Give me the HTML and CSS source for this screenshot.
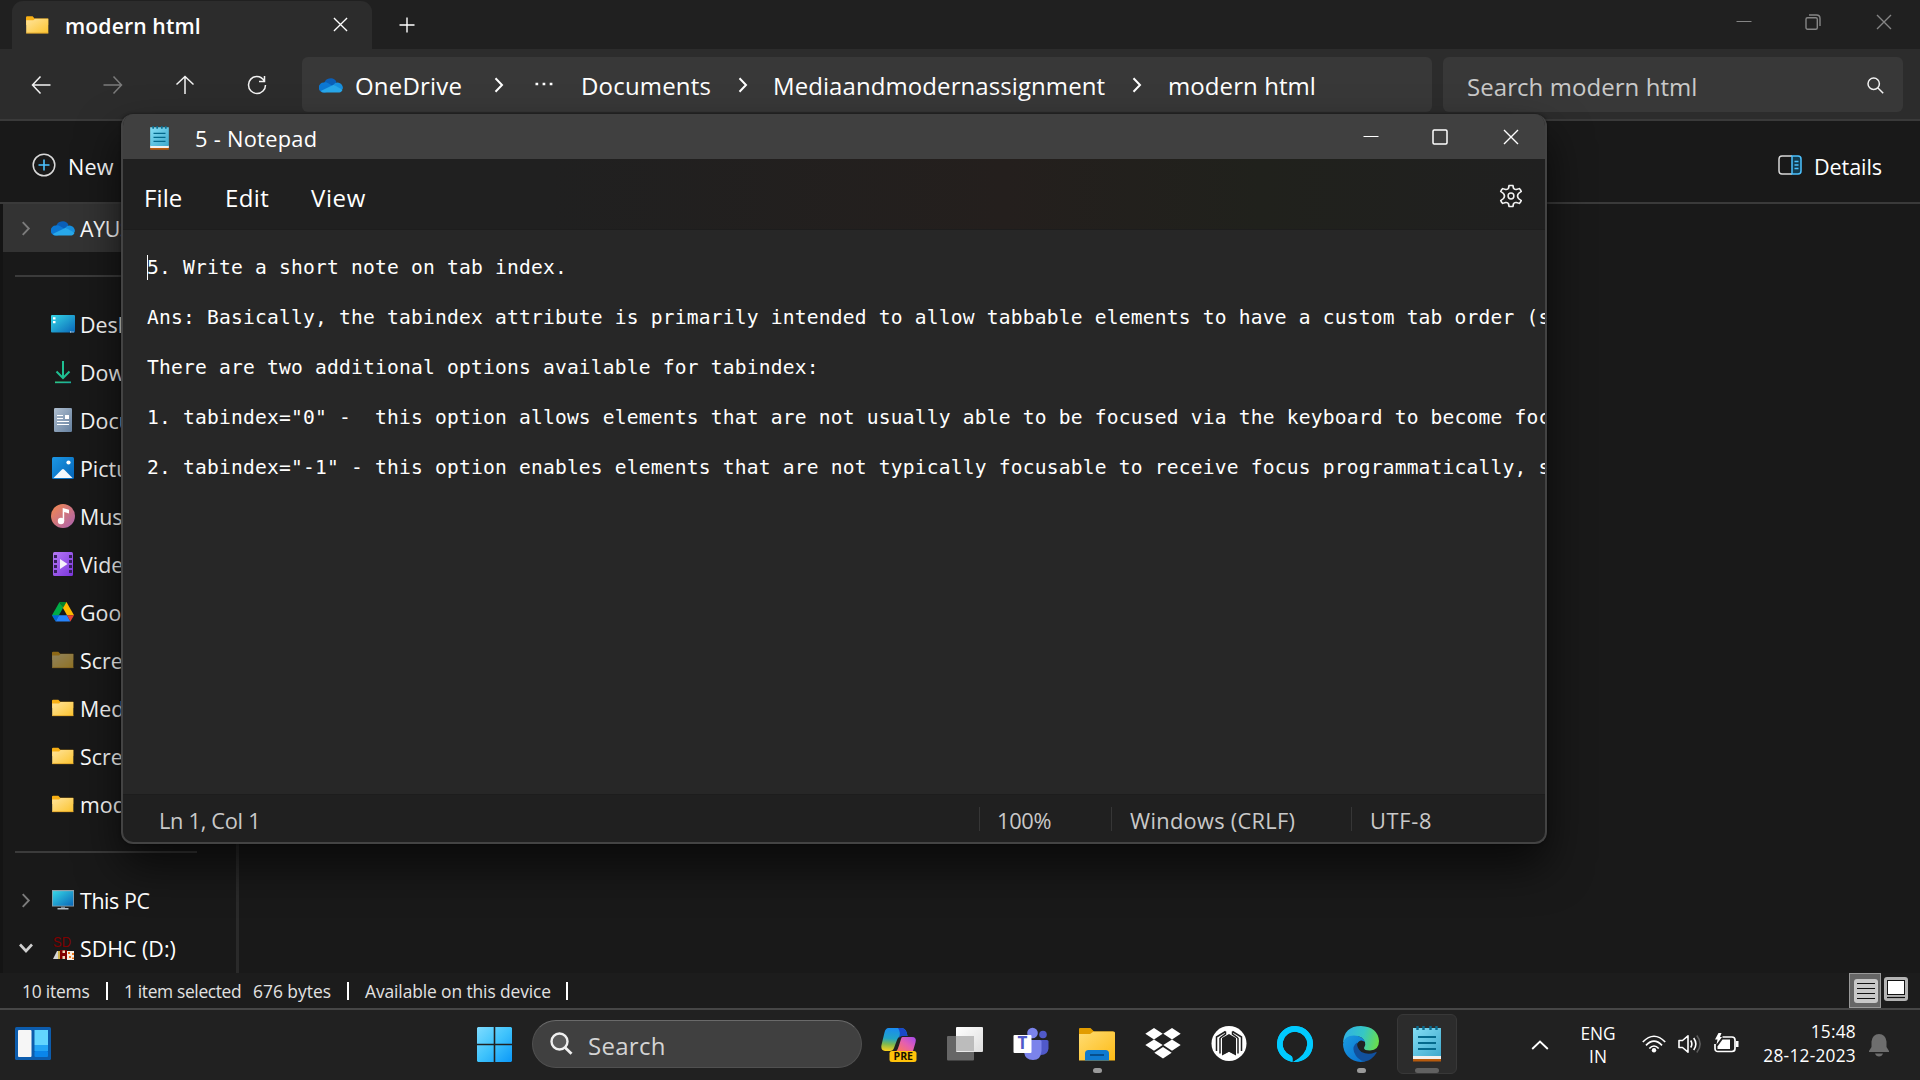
FILE: index.html
```html
<!DOCTYPE html>
<html lang="en">
<head>
<meta charset="utf-8">
<title>modern html</title>
<link rel="stylesheet" href="styles.css">
</head>
<body>
<svg class="sprite" width="0" height="0" aria-hidden="true">
  <defs>
    <linearGradient id="gFolder" x1="0" y1="0" x2="1" y2="1"><stop offset="0" stop-color="#ffe49c"/><stop offset="1" stop-color="#fcc42f"/></linearGradient>
    <linearGradient id="gPad" x1="0" y1="0" x2="1" y2="1"><stop offset="0" stop-color="#83def5"/><stop offset="1" stop-color="#3fa9cd"/></linearGradient>
    <linearGradient id="gDesk" x1="0" y1="0" x2="1" y2="1"><stop offset="0" stop-color="#35d6e6"/><stop offset="1" stop-color="#0a66b8"/></linearGradient>
    <linearGradient id="gDown" x1="0" y1="0" x2="1" y2="1"><stop offset="0" stop-color="#34d07c"/><stop offset="1" stop-color="#12a5a8"/></linearGradient>
    <linearGradient id="gDoc" x1="0" y1="0" x2="1" y2="1"><stop offset="0" stop-color="#b0bfd0"/><stop offset="1" stop-color="#65809f"/></linearGradient>
    <linearGradient id="gPic" x1="0" y1="0" x2="1" y2="1"><stop offset="0" stop-color="#1c97e4"/><stop offset="1" stop-color="#0565b8"/></linearGradient>
    <linearGradient id="gMusic" x1="0" y1="0" x2="1" y2="1"><stop offset="0" stop-color="#f58a4b"/><stop offset="1" stop-color="#a961b4"/></linearGradient>
    <linearGradient id="gVideo" x1="0" y1="0" x2="1" y2="1"><stop offset="0" stop-color="#b578f5"/><stop offset="1" stop-color="#7b35dc"/></linearGradient>
    <linearGradient id="gWin" gradientUnits="userSpaceOnUse" x1="0" y1="0" x2="35" y2="35"><stop offset="0" stop-color="#7fdcff"/><stop offset=".5" stop-color="#3fc3fc"/><stop offset="1" stop-color="#0b98f8"/></linearGradient>
    <linearGradient id="gCoA" x1=".3" y1="0" x2=".2" y2="1"><stop offset="0" stop-color="#1a8cf0"/><stop offset=".45" stop-color="#22a5c5"/><stop offset=".7" stop-color="#7fb94f"/><stop offset="1" stop-color="#ffd21a"/></linearGradient>
    <linearGradient id="gCoB" x1="1" y1="0" x2="0" y2="1"><stop offset="0" stop-color="#a44af0"/><stop offset=".5" stop-color="#e45fb0"/><stop offset="1" stop-color="#ff7a55"/></linearGradient>
    <linearGradient id="gView" x1="0" y1="0" x2="1" y2="1"><stop offset="0" stop-color="#fff"/><stop offset="1" stop-color="#ddd"/></linearGradient>
    <linearGradient id="gFolder2" x1="0" y1="0" x2="1" y2="1"><stop offset="0" stop-color="#ffdc73"/><stop offset="1" stop-color="#fdbb15"/></linearGradient>
    <linearGradient id="gEdgeT" x1="0" y1=".3" x2="1" y2=".5"><stop offset="0" stop-color="#2fb0e6"/><stop offset=".55" stop-color="#36c7c4"/><stop offset="1" stop-color="#68dc4e"/></linearGradient>
    <linearGradient id="gEdgeL" x1="0" y1="0" x2="1" y2="1"><stop offset="0" stop-color="#1a9be0"/><stop offset="1" stop-color="#0a70cf"/></linearGradient>
    <symbol id="folder" viewBox="0 0 23 18"><path d="M0 1.5Q0 .3 1.2.3H6.6L8.6 2.4H22.2V9H0Z" fill="#f8b015"/><path d="M.2 4.3H7.4L9 2.8H22.3V17.3H.2Z" fill="url(#gFolder)"/><path d="M.2 16.6H22.3V17.5H.2Z" fill="#e0a52a"/></symbol>
    <symbol id="cloud" viewBox="0 0 24 16"><path d="M5 8A6.6 6.6 0 0 1 17.5 5L14 11H5Z" fill="#0a5fb8"/><path d="M4.800 5.600Q7 4.800 9.200 6.200L19 12 6 15.600H4.600A4.800 4.800 0 0 1 4.800 5.600Z" fill="#0c78d4"/><path d="M14.500 7.400Q17 4.700 19.700 5.700 23.800 7 24 11.500L20 14Z" fill="#1790df"/><path d="M1.700 14L14.600 7.700 23.600 12.700Q22.500 15.600 19 15.600H5Q3 15.500 1.700 14Z" fill="#28a8ea"/></symbol>
    <symbol id="notepad" viewBox="0 0 28 36"><path d="M0 30H28V35.500H0Z" fill="#b85a0c"/><path d="M0 29H28V33H0Z" fill="#f2f0ee"/><path d="M0 2H28V30H0Z" fill="url(#gPad)"/><path d="M4.500 0V4M10.500 0V4M17.500 0V4M23.500 0V4" stroke="#0b6a8c" stroke-width="2.400"/><path d="M5 11H23M5 17H23M5 23H23" stroke="#04698c" stroke-width="2"/></symbol>
    <symbol id="chev" viewBox="0 0 10 16"><path d="M1.500 1.200L8 8 1.500 14.800" fill="none" stroke="currentColor" stroke-width="2"/></symbol>
    <symbol id="x" viewBox="0 0 16 16"><path d="M1 1L15 15M15 1L1 15" fill="none" stroke="currentColor" stroke-width="1.400"/></symbol>
  </defs>
</svg>

<div class="desktop">
<div class="explorer">
  <header class="tabs">
    <div class="tab">
      <svg width="23" height="18"><use href="#folder"/></svg>
      <span class="tab-name">modern html</span>
      <svg class="tab-close" width="15" height="15"><use href="#x"/></svg>
    </div>
    <svg class="tab-add" width="16" height="16" viewBox="0 0 16 16"><path d="M8 .5V15.500M.5 8H15.500" stroke="#fff" stroke-width="1.400"/></svg>
    <div class="caption caption-dim">
      <svg width="16" height="16" viewBox="0 0 16 16"><path d="M.5 7.500H15.500" stroke="currentColor" stroke-width="1"/></svg>
      <svg width="16" height="16" viewBox="0 0 16 16"><g fill="none" stroke="currentColor" stroke-width="1.400"><rect x="1" y="3.700" width="11.300" height="11.600" rx="1.500"/><path d="M4 1H11.500Q15 1 15 4.500V12"/></g></svg>
      <svg width="16" height="16"><use href="#x"/></svg>
    </div>
  </header>

  <nav class="navbar">
    <div class="arrows">
      <svg width="20" height="20" viewBox="0 0 20 20"><path d="M19.500 10H1.500M9.500 1.500L1.500 10 9.500 18.500" class="line"/></svg>
      <svg class="dim" width="20" height="20" viewBox="0 0 20 20"><path d="M.5 10H18.500M10.500 1.500L18.500 10 10.500 18.500" class="line"/></svg>
      <svg width="20" height="20" viewBox="0 0 20 20"><path d="M10 19V1.500M1.500 9.500L10 1.500 18.500 9.500" class="line"/></svg>
      <svg width="20" height="20" viewBox="0 0 20 20"><path d="M17.500 1V6.500H12M17.500 6.500Q14.700 1.300 9.500 1.500A8.400 8.400 0 0 0 1.500 10 8.500 8.500 0 0 0 18.500 10" class="line"/></svg>
    </div>
    <div class="address">
      <svg width="24" height="16"><use href="#cloud"/></svg>
      <span>OneDrive</span>
      <svg class="crumb-sep" width="10" height="16"><use href="#chev"/></svg>
      <svg class="more" width="18" height="4" viewBox="0 0 18 4"><path d="M.5 2H3.200M7.600 2H10.300M14.700 2H17.400" stroke="#fff" stroke-width="2.400"/></svg>
      <span>Documents</span>
      <svg class="crumb-sep" width="10" height="16"><use href="#chev"/></svg>
      <span class="crumb-long">Mediaandmodernassignment</span>
      <svg class="crumb-sep" width="10" height="16"><use href="#chev"/></svg>
      <span class="crumb-last">modern html</span>
    </div>
    <div class="find">
      <span>Search modern html</span>
      <svg width="17" height="17" viewBox="0 0 17 17"><circle cx="6.700" cy="6.700" r="5.700" class="line"/><path d="M10.700 10.700L16.200 16.200" class="line"/></svg>
    </div>
  </nav>

  <div class="commands">
    <div class="command">
      <svg width="24" height="24" viewBox="0 0 24 24"><circle cx="12" cy="12" r="10.800" fill="none" stroke="#d8d8d8" stroke-width="1.500"/><path d="M12 6.500V17.500M6.500 12H17.500" stroke="#4cc2ff" stroke-width="1.600"/></svg>
      <span>New</span>
    </div>
    <div class="command details">
      <svg width="24" height="20" viewBox="0 0 24 20"><path d="M14 1H4Q1 1 1 4V16Q1 19 4 19H14" fill="none" stroke="#d8d8d8" stroke-width="1.500"/><path d="M14 1H20Q23 1 23 4V16Q23 19 20 19H14Z" fill="#123c50" stroke="#4cc2ff" stroke-width="1.500"/><path d="M16.500 6.500H20.500M16.500 10H20.500M16.500 13.500H20.500" stroke="#4cc2ff" stroke-width="1.400"/></svg>
      <span>Details</span>
    </div>
  </div>

  <div class="content">
    <aside class="tree">
      <div class="node selected"><svg class="toggle" width="10" height="15"><use href="#chev"/></svg><i><svg width="24" height="16"><use href="#cloud"/></svg></i><span class="tight">AYUSH</span></div>
      <div class="rule"></div>
      <div class="node"><i><svg width="24" height="18" viewBox="0 0 24 18"><rect width="24" height="17.500" rx="1" fill="url(#gDesk)"/><path d="M2 2.200H4.500V4.500H2ZM2 6H4.500V8.200H2ZM19 16.500H20.500V17.500H19ZM21.500 16.500H22.500V17.500H21.500Z" fill="#fff"/></svg></i><span>Desktop</span></div>
      <div class="node"><i><svg width="18" height="24" viewBox="0 0 18 24"><path d="M9 1V18M2.500 11.500L9 18 15.500 11.500" fill="none" stroke="#1fbf92" stroke-width="2"/><path d="M1 21.500H17V23.200H1Z" fill="url(#gDown)"/></svg></i><span>Downloads</span></div>
      <div class="node"><i><svg width="18" height="24" viewBox="0 0 18 24"><rect width="18" height="24" rx="1.300" fill="url(#gDoc)"/><path d="M3 7.500H9M3 10.500H9M3 13.500H15M3 16.500H15" stroke="#fff" stroke-width="1.200"/><path d="M11 7H15V11H11Z" fill="#fff"/></svg></i><span>Documents</span></div>
      <div class="node"><i><svg width="22" height="22" viewBox="0 0 22 22"><rect width="22" height="22" rx="1.500" fill="url(#gPic)"/><path d="M1.500 21L9.700 12.700Q11 11.500 12.300 12.700L20.500 21Z" fill="#f3f8fc"/><circle cx="16.500" cy="5.500" r="2.100" fill="#fff"/></svg></i><span>Pictures</span></div>
      <div class="node"><i><svg width="24" height="24" viewBox="0 0 24 24"><circle cx="12" cy="12" r="12" fill="url(#gMusic)"/><circle cx="10" cy="17" r="3.200" fill="#fff"/><path d="M11.700 17V4L18 5.800V9.500L13.200 8V17Z" fill="#fff"/></svg></i><span>Music</span></div>
      <div class="node"><i><svg width="20" height="24" viewBox="0 0 20 24"><rect width="20" height="24" rx="1.500" fill="url(#gVideo)"/><path d="M2.500 3V22M17.500 3V22" stroke="#35205c" stroke-width="3" stroke-dasharray="3 2"/><path d="M7 7V17L14.500 12Z" fill="#f4f0fa"/></svg></i><span>Videos</span></div>
      <div class="node"><i><svg width="22" height="20" viewBox="0 0 22 20"><path d="M7.500 0L11 6 3.600 19 0 13.200Z" fill="#00ac47"/><path d="M14.500 0L22 13.200H15L9.500 3.600 11 1Z" fill="#ffba00"/><path d="M11 6L14.500 0 7.500 0Z" fill="#00832d"/><path d="M0 13.200H7L3.600 19.500Z" fill="#0066da"/><path d="M7 13.200H15L18.400 19.500H3.600Z" fill="#2684fc"/><path d="M15 13.200H22L18.400 19.500Z" fill="#ea4335"/></svg></i><span>Google Drive</span></div>
      <div class="node"><i><svg class="faded" width="22" height="18"><use href="#folder"/></svg></i><span>Screenshots</span></div>
      <div class="node"><i><svg width="22" height="18"><use href="#folder"/></svg></i><span>Media</span></div>
      <div class="node"><i><svg width="22" height="18"><use href="#folder"/></svg></i><span>Screenshots</span></div>
      <div class="node"><i><svg width="22" height="18"><use href="#folder"/></svg></i><span>modern html</span></div>
      <div class="rule"></div>
      <div class="node"><svg class="toggle" width="10" height="15"><use href="#chev"/></svg><i><svg width="22" height="20" viewBox="0 0 22 20"><rect width="22" height="16.500" fill="#8fa0aa"/><rect x=".8" y="1.200" width="20.400" height="14.500" fill="url(#gDesk)"/><path d="M9 16.500H13V18.500H9Z" fill="#77838c"/><path d="M5.500 18H16.500V19.500H5.500Z" fill="#b4bdc4"/></svg></i><span class="tight">This PC</span></div>
      <div class="node"><svg class="toggle open" width="14" height="10" viewBox="0 0 14 10"><path d="M1 1.500L7 8 13 1.500" fill="none" stroke="#cfcfcf" stroke-width="2.600"/></svg><i><svg class="card" width="22" height="26" viewBox="0 0 22 26"><text x="1" y="13" class="sd" textLength="18" lengthAdjust="spacingAndGlyphs">SD</text><g transform="translate(0 2)"><path d="M1 23L5 15H7V23Z" fill="#d5d5d5"/><path d="M6 15H9V23H6Z" fill="#d0b34c"/><path d="M8 14H15V23H8Z" fill="#800000"/><path d="M15 15H22V24H15Z" fill="#f6efe4"/><path d="M16 16H18V18H16ZM20 17H22V19H20ZM17 20H19V22H17ZM20 21.500H22V23H20Z" fill="#f07a1c"/><path d="M10.500 14.500H13V17H10.500ZM10.500 20H13V23H10.500Z" fill="#e8d8b8"/></g></svg></i><span>SDHC (D:)</span></div>
    </aside>
    <div class="files"></div>
  </div>

  <footer class="statusbar">
    <span class="st-items">10 items</span>
    <span class="st-sel">1 item selected</span>
    <span class="st-size">676 bytes</span>
    <span class="st-avail">Available on this device</span>
    <div class="views">
      <div class="view-on"><svg width="24" height="24" viewBox="0 0 24 24"><rect width="24" height="24" rx="3" fill="#c8c8c8"/><path d="M3 4.500H21M3 9.500H21M3 14.500H21M3 19.500H21" stroke="#111" stroke-width="1.200"/></svg></div>
      <svg class="view-off" width="24" height="24" viewBox="0 0 24 24"><rect width="24" height="24" rx="3" fill="#b4b4b4"/><rect x="3.500" y="3.500" width="17" height="14" fill="#fff" stroke="#111"/><path d="M3 20.500H21" stroke="#111" stroke-width="1.200"/></svg>
    </div>
  </footer>
</div>

<section class="notepad">
  <header class="np-title">
    <svg width="19" height="24"><use href="#notepad"/></svg>
    <span>5 - Notepad</span>
    <div class="caption">
      <svg width="16" height="16" viewBox="0 0 16 16"><path d="M.5 7.500H15.500" stroke="currentColor" stroke-width="1"/></svg>
      <svg width="16" height="16" viewBox="0 0 16 16"><rect x="1" y="1" width="14" height="14" rx="1.200" fill="none" stroke="currentColor" stroke-width="1.500"/></svg>
      <svg width="16" height="16"><use href="#x"/></svg>
    </div>
  </header>
  <div class="np-menu">
    <span class="m-file">File</span><span class="m-edit">Edit</span><span class="m-view">View</span>
    <svg width="24" height="24" viewBox="0 0 24 24"><path d="M9.800 4.300L10.300 1.600Q12 1.200 13.700 1.600L14.200 4.300Q14.800 5.700 16.600 5.500L19.200 4.600Q20.400 5.900 20.900 7.500L18.800 9.300Q17.700 10.500 17.700 12T18.800 14.700L20.900 16.500Q20.400 18.100 19.200 19.400L16.600 18.500Q14.800 18.300 14.200 19.700L13.700 22.400Q12 22.800 10.300 22.400L9.800 19.700Q9.200 18.300 7.400 18.500L4.800 19.400Q3.600 18.100 3.100 16.500L5.200 14.700Q6.300 13.500 6.300 12T5.200 9.300L3.100 7.500Q3.600 5.900 4.800 4.600L7.400 5.500Q9.200 5.700 9.800 4.300Z" transform="translate(-1.800 0) scale(1.150 1)" fill="none" stroke="#f0f0f0" stroke-width="1.500" stroke-linejoin="round"/><circle cx="12" cy="12" r="2.900" fill="none" stroke="#f0f0f0" stroke-width="1.500"/></svg>
  </div>
  <div class="np-text"><pre><span class="caret"></span>5. Write a short note on tab index.

Ans: Basically, the tabindex attribute is primarily intended to allow tabbable elements to have a custom tab order (such

There are two additional options available for tabindex:

1. tabindex="0" -  this option allows elements that are not usually able to be focused via the keyboard to become focusable

2. tabindex="-1" - this option enables elements that are not typically focusable to receive focus programmatically, such</pre></div>
  <footer class="np-status">
    <span class="np-pos">Ln 1, Col 1</span>
    <span class="np-zoom">100%</span>
    <span class="np-eol">Windows (CRLF)</span>
    <span class="np-enc">UTF-8</span>
  </footer>
</section>

<footer class="taskbar">
  <div class="widgets"><svg width="36" height="33" viewBox="0 0 36 33"><rect width="36" height="33" rx="1.500" fill="#0c5cad"/><rect x="3" y="3" width="13.500" height="27" rx="1" fill="#f6f6f6"/><rect x="19.500" y="3" width="13.500" height="15" fill="#62d5ff"/><rect x="19.500" y="18" width="13.500" height="6" fill="#22a4f5"/><rect x="19.500" y="24" width="13.500" height="6" rx="1" fill="#0a85ea"/></svg></div>
  <svg class="start" width="35" height="35" viewBox="0 0 35 35"><path d="M1 0H16.700V16.700H0V1ZM18.300 0H34L35 1V16.700H18.300ZM0 18.300H16.700V35H1L0 34ZM18.300 18.300H35V34L34 35H18.300Z" fill="url(#gWin)"/></svg>
  <div class="tb-search">
    <svg width="23" height="23" viewBox="0 0 23 23"><circle cx="9.500" cy="9.500" r="8" fill="#5a5a5a" stroke="#f0f0f0" stroke-width="2.400"/><path d="M15 15.500L21.500 21.800" stroke="#f0f0f0" stroke-width="2.800"/></svg>
    <span>Search</span>
  </div>
  <div class="apps">
    <div class="app"><svg width="36" height="36" viewBox="0 0 36 36"><path d="M7.500 2H20Q24 2 25.500 6L26.500 10H21Q17.500 10 16 14L13 22Q12 25 9 25H4Q-.5 24.500.5 19L3.500 6.500Q4.500 2 7.500 2Z" fill="url(#gCoA)"/><path d="M17 2H20Q24 2 25.500 6L26.500 10H21Q19 10 18 12Q20 6 17 2Z" fill="#1a48c8"/><path d="M21.500 11H31Q36 11 34.500 16.500L32 25H15.500Q17 23 18 19.500L20 13Q20.500 11 21.500 11Z" fill="url(#gCoB)"/><rect x="8.500" y="25" width="27" height="11" rx="2.500" fill="#ffc20a"/><text x="12.500" y="33.500" class="pre" textLength="19.500" lengthAdjust="spacingAndGlyphs">PRE</text></svg></div>
    <div class="app"><svg width="36" height="36" viewBox="0 0 36 36"><rect y="10" width="27" height="24.500" rx="1" fill="#666"/><rect x="9" y="1" width="27" height="25" rx="1" fill="url(#gView)"/><path d="M9 10H27V25H9Z" fill="#bcbcbc"/></svg></div>
    <div class="app"><svg width="36" height="36" viewBox="0 0 36 36"><circle cx="30" cy="8.500" r="3.800" fill="#5059c9"/><path d="M27 14H34Q35.500 14 35.500 15.500V22.500Q35 29 28 29Z" fill="#5059c9"/><circle cx="19.500" cy="7" r="5.300" fill="#7b83eb"/><path d="M12 14H27Q28.500 14 28.500 15.500V25Q28 34 20 34T11 26Z" fill="#7b83eb"/><rect x=".5" y="9" width="18" height="18" rx="1" fill="#fff"/><text x="9.500" y="23" class="tee">T</text></svg></div>
    <div class="app running"><svg width="36" height="36" viewBox="0 0 36 36"><path d="M0 3Q0 2 1 2H11.500L15 5.500H34V15H0Z" fill="#e29c00"/><path d="M0 8H11L14.500 5.500H35L36 6.500V34.500H0Z" fill="url(#gFolder2)"/><path d="M6 34.500V27.500Q6 24 9.500 24H26.500Q30 24 30 27.500V34.500Z" fill="#0f7ad0"/><path d="M11 29H25" stroke="#04437c" stroke-width="1.600"/></svg></div>
    <div class="app"><svg width="36" height="36" viewBox="0 0 36 36"><path d="M9 2L17.700 7.700 9 13.400 .3 7.700ZM27 2L35.700 7.700 27 13.400 18.300 7.700ZM9 13.400L17.700 19.100 9 24.800 .3 19.100ZM27 13.400L35.700 19.100 27 24.800 18.300 19.100ZM18 21L26.700 26.700 18 32.400 9.300 26.700Z" fill="#fff"/></svg></div>
    <div class="app"><svg width="36" height="36" viewBox="0 0 36 36"><circle cx="18" cy="17.500" r="17.500" fill="#fff"/><path d="M18 8L25 12V29.500L18 26 11 29.500V12Z" fill="#202020"/><path d="M18 26L26 31H10Z" fill="#fff"/><path d="M14.500 5.500L5.500 11V25M21.500 5.500L30.500 11V25M9 12V27.500M27 12V27.500" fill="none" stroke="#202020" stroke-width="1.500"/><path d="M14.500 5.500V8L9 12M21.500 5.500V8L27 12" fill="none" stroke="#202020" stroke-width="1.500"/></svg></div>
    <div class="app"><svg width="36" height="36" viewBox="0 0 36 36"><path d="M15.500 35.900V32.500Q15.500 30.500 13.500 29.500A12.300 12.300 0 1 1 30.300 18.500Q29.500 28.500 16 36A18 18 0 1 0 0 18 18 18 0 0 0 15.500 35.900Z" fill="#00caff" fill-rule="evenodd"/><path d="M15.500 35.900A18 18 0 1 1 36 18Q35 35 16 36Q29.500 30 30.300 18A12.300 12.300 0 1 0 14 29.700Q15.500 30.500 15.500 32.500Z" fill="#00caff"/></svg></div>
    <div class="app running"><svg width="36" height="36" viewBox="0 0 36 36"><path d="M0 17Q1 0 18 0 35 1 36 15 36 24 27 24.500 21 24.500 21 22 23 19 22 16 19 9 11 10 3 11 0 17Z" fill="url(#gEdgeT)"/><path d="M0 18Q1 9.500 11 9.500 20 10 22 16 17 12 14 18 11 26 19 31L22 35.500Q12 37.500 5 30.500 0 25 0 18Z" fill="url(#gEdgeL)"/><path d="M14 16.500Q9 20 11 26 14 34 22 35.600 29 34 33.500 27 34 25.700 32.500 26.300 25 29.500 18.500 26 14 23 14 16.500Z" fill="#11509c"/></svg></div>
    <div class="app active"><svg width="28" height="36"><use href="#notepad"/></svg></div>
  </div>
  <div class="tray">
    <svg class="up" width="18" height="10" viewBox="0 0 18 10"><path d="M1.200 9L9 1.500 16.800 9" fill="none" stroke="#fff" stroke-width="1.900"/></svg>
    <div class="lang"><span>ENG</span><span>IN</span></div>
    <svg class="wifi" width="24" height="18" viewBox="0 0 24 18"><g fill="none" stroke="#fff" stroke-width="1.700"><path d="M.8 7Q12-4.500 23.200 7M4 10.300Q12 2 20 10.300M7.300 13.500Q12 8.500 16.700 13.500"/></g><circle cx="12" cy="15.300" r="2.200" fill="#fff"/></svg>
    <svg class="vol" width="24" height="20" viewBox="0 0 24 20"><g fill="none" stroke="#fff" stroke-width="1.600" stroke-linejoin="round"><path d="M1 6.500H4.500L10 1.800V18.200L4.500 13.500H1Z"/><path d="M12.700 6.500Q15 10 12.700 13.500M15.700 4Q20 10 15.700 16"/><path d="M18.800 1.500Q25.500 10 18.800 18.500" stroke="#5c5c5c"/></g></svg>
    <svg class="bat" width="25" height="22" viewBox="0 0 25 22"><path d="M8.500 5H18Q21 5 21 8V16.500Q21 19.500 18 19.500H4Q1 19.500 1 16.500V12" fill="none" stroke="#fff" stroke-width="1.700"/><path d="M22 9H24.500V15H22Z" fill="#fff"/><path d="M8.500 7.500H16V17H3.500V14.500Z" fill="#fff"/><path d="M4.500 1H7.500L6 5H8L2.500 12.500 3.500 7.500H1Z" fill="#fff"/></svg>
    <div class="clock"><span>15:48</span><span>28-12-2023</span></div>
    <svg class="bell" width="20" height="24" viewBox="0 0 20 24"><path d="M2.500 8.500Q3.500 1 10 1T17.500 8.500V14L20 18V19H0V18L2.500 14ZM6 20.500H14Q13 23.500 10 23.500T6 20.500Z" fill="#6e6e6e"/></svg>
  </div>
</footer>
</div>
</body>
</html>
```
FILE: styles.css
```css
* { box-sizing: border-box; }
body {
  margin: 0;
  background: #191919;
  color: #fff;
  font-family: "Open Sans", "Noto Sans", sans-serif;
}
svg { display: block; flex: none; }
.sprite { position: absolute; }
.desktop {
  position: relative;
  width: 1920px;
  height: 1080px;
  overflow: hidden;
  display: flex;
  flex-direction: column;
}
.line { fill: none; stroke: #f2f2f2; stroke-width: 1.5; }
.dim { opacity: .4; }

/* File explorer */
.explorer { height: 1010px; display: flex; flex-direction: column; border-bottom: 2px solid #464646; }
.tabs { height: 49px; display: flex; align-items: center; padding-left: 12px; background: #202020; }
.tab {
  width: 360px;
  height: 48px;
  margin-top: 1px;
  display: flex;
  align-items: center;
  padding: 0 24px 1px 14px;
  background: #2c2c2c;
  border-radius: 11px 11px 0 0;
}
.tab-name { margin: 2px 0 0 16px; font-size: 21.2px; font-weight: 600; letter-spacing: .1px; }
.tab-close { margin-left: auto; }
.tab-add { margin-left: 27px; margin-top: 1px; }
.caption { margin-left: auto; display: flex; align-items: center; }
.caption svg { margin-left: 53px; }
.caption svg:last-child { margin-left: 55px; }
.caption-dim { color: #858585; padding: 0 28px 5px 0; }

.navbar { height: 72px; display: flex; padding: 8px 0 6px 5px; background: #2c2c2c; border-bottom: 2px solid #3a3a3a; }
.arrows { width: 297px; height: 55px; display: flex; align-items: center; }
.arrows svg { margin: 0 26px; }
.address {
  width: 1130px;
  height: 55px;
  display: grid;
  grid-template-columns: 36px 126px 36px 64px 138px 48px 346px 48px 1fr;
  align-items: center;
  padding: 1px 0 0 17px;
  background: #383838;
  border-radius: 6px;
  font-size: 24px;
  letter-spacing: .18px;
}
.address .crumb-sep { justify-self: center; }
.more { margin-left: 18px; margin-top: -3px; }
.crumb-long { padding-left: 6px; letter-spacing: .08px; }
.crumb-last { padding-left: 7px; letter-spacing: .08px; }
.find {
  width: 460px;
  height: 55px;
  margin-left: 11px;
  display: flex;
  align-items: center;
  justify-content: space-between;
  padding: 1px 19px 0 24px;
  background: #383838;
  border-radius: 6px;
  font-size: 24px;
  letter-spacing: .06px;
  color: #c9c9c9;
}
.find span { padding-top: 2px; }

.commands { height: 83px; display: flex; justify-content: space-between; align-items: center; padding: 9px 38px 0 32px; background: #191919; border-bottom: 2px solid #3a3a3a; }
.command { display: flex; align-items: center; gap: 12px; font-size: 21.6px; letter-spacing: .2px; }
.command span { padding-top: 1px; }
.command svg { margin-top: -2px; }
.details { letter-spacing: -.1px; }

.content { height: 769px; display: flex; }
.tree { width: 239px; border-left: 3px solid #141414; border-right: 3px solid #2a2a2a; overflow: hidden; }
.node { position: relative; height: 48px; display: flex; align-items: center; padding-left: 44px; font-size: 21.4px; white-space: nowrap; }
.node i { width: 33px; display: flex; justify-content: center; padding-right: 1px; }
.node span { padding-top: 1px; }
.node .tight { letter-spacing: -.4px; }
.selected { background: #333; }
.toggle { position: absolute; left: 18px; color: #7c7c7c; }
.toggle.open { left: 16px; }
.card { margin-top: -3px; }
.rule { height: 48px; padding: 23px 39px 0 12px; }
.rule::before { content: ""; display: block; height: 2px; background: #3b3b3b; }
.faded { opacity: .52; }
.sd { font: 15px "Liberation Sans", sans-serif; fill: #800000; }
.pre { font: bold 10.5px "Open Sans", sans-serif; fill: #1a1200; }
.tee { font: bold 17px "Open Sans", sans-serif; fill: #5059c9; text-anchor: middle; }
.files { flex: 1; background: #191919; }

.statusbar { height: 35px; display: flex; align-items: center; padding-left: 22px; background: #1c1c1c; font-size: 17.4px; color: #e2e2e2; white-space: nowrap; letter-spacing: -.2px; }
.st-items { width: 86px; border-right: 2px solid #fff; line-height: 18px; }
.st-sel { width: 145px; padding-left: 16px; line-height: 18px; letter-spacing: -.35px; }
.st-size { width: 96px; border-right: 2px solid #fff; line-height: 18px; letter-spacing: 0; }
.st-avail { width: 219px; padding-left: 16px; border-right: 2px solid #fff; line-height: 18px; letter-spacing: -.1px; }
.views { display: flex; margin-left: auto; padding-right: 12px; }
.view-on { width: 32px; height: 35px; padding: 5px 4px; background: #666; border: 1px solid #999; }
.view-off { margin: 4px 0 0 3px; }

/* Notepad window floating over the explorer */
.notepad {
  position: absolute;
  left: 121px;
  top: 114px;
  width: 1426px;
  height: 730px;
  display: flex;
  flex-direction: column;
  overflow: hidden;
  border: 2px solid #434343;
  border-top: 0;
  border-radius: 12px;
  background: #202020;
  box-shadow: 0 22px 44px rgba(0, 0, 0, .62), 0 0 3px rgba(0, 0, 0, .5);
}
.np-title { height: 45px; display: flex; align-items: center; padding: 2px 26px 0 27px; background: #404040; font-size: 21.8px; letter-spacing: .3px; }
.np-title > span { margin-left: 26px; padding-top: 1px; }
.np-title .caption { padding-bottom: 2px; }
.np-menu {
  height: 71px;
  display: flex;
  align-items: center;
  padding: 6px 21px 0;
  background: linear-gradient(90deg, #202020 30%, #241f1d 62%, #20211c 80%, #202020);
  border-bottom: 1px solid #1d1d1d;
  font-size: 24px;
  letter-spacing: .35px;
}
.m-file { width: 81px; letter-spacing: .1px; }
.m-edit { width: 86px; }
.m-view { letter-spacing: .6px; }
.np-menu svg { margin: -3px 1px 0 auto; }
.np-text { height: 564px; padding: 25px 0 0 24px; background: #272727; overflow: hidden; }
.np-text pre { position: relative; margin: 0; font: 19.6px/25px "DejaVu Sans Mono", "Liberation Mono", monospace; letter-spacing: .2px; }
.caret { position: absolute; left: 0; top: 0; width: 1px; height: 25px; background: #fff; }
.np-status { flex: 1; display: flex; align-items: flex-start; padding: 12px 0 0 36px; border-top: 1px solid #1d1d1d; font-size: 21.8px; line-height: 28px; color: #c9c9c9; white-space: nowrap; }
.np-pos { width: 820px; letter-spacing: -.3px; }
.np-zoom, .np-eol, .np-enc { height: 24px; border-left: 1px solid #363636; padding-left: 18px; }
.np-zoom { width: 132px; letter-spacing: -.3px; padding-left: 17px; }
.np-eol { width: 240px; letter-spacing: .3px; }
.np-enc { letter-spacing: .7px; }

/* Taskbar */
.taskbar { height: 70px; display: flex; background: #212121; }
.widgets { width: 477px; padding: 17px 0 0 15px; }
.start { margin-top: 17px; }
.tb-search {
  width: 330px;
  height: 48px;
  margin: 10px 0 0 20px;
  display: flex;
  align-items: center;
  gap: 15px;
  padding-left: 17px;
  background: #404040;
  border: 1px solid #505050;
  border-top-color: #6a6a6a;
  border-radius: 24px;
  font-size: 24px;
  color: #d4d4d4;
}
.tb-search svg { margin-top: -2px; }
.tb-search span { padding-top: 2px; letter-spacing: .3px; }
.apps { width: 588px; display: flex; margin: 4px 0 0 7px; gap: 6px; }
.app { position: relative; width: 60px; height: 60px; display: flex; justify-content: center; align-items: flex-start; padding-top: 12px; border-radius: 6px; }
.running::after, .active::after { content: ""; position: absolute; bottom: 1px; left: 26px; width: 9px; height: 5px; border-radius: 3px; background: #9a9a9a; }
.active { background: #2c2c2c; border: 1px solid #383838; padding-top: 11px; }
.active::after { left: 17px; bottom: 0; width: 24px; background: #616161; }
.tray { flex: 1; display: flex; font-size: 17.3px; }
.up { margin: 30px 0 0 74px; }
.lang { width: 50px; margin: 13px 0 0 24px; display: flex; flex-direction: column; align-items: center; line-height: 22.7px; }
.wifi { margin: 25px 0 0 19px; }
.vol { margin: 24px 0 0 12px; }
.bat { margin: 22px 0 0 12px; }
.clock { width: 117px; margin-top: 10px; display: flex; flex-direction: column; align-items: flex-end; line-height: 24px; letter-spacing: .25px; }
.bell { margin: 23px 0 0 13px; }
```
